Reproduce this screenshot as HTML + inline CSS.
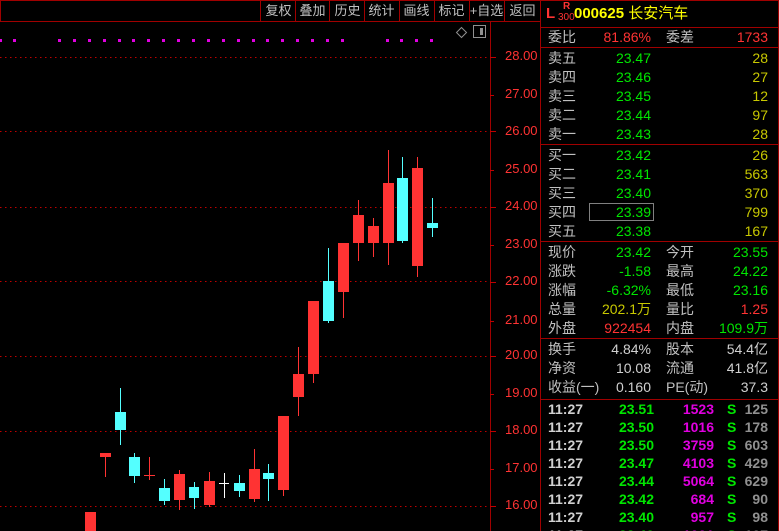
<!DOCTYPE html>
<html><head><meta charset="utf-8"><style>
*{margin:0;padding:0;box-sizing:border-box}
html,body{width:779px;height:531px;overflow:hidden}
body{background:#000;position:relative;font-family:"Liberation Sans","Noto Sans CJK SC",sans-serif;font-size:14px;color:#c0c0c0}
.a{position:absolute;white-space:nowrap;line-height:18px}
.r{text-align:right}
.g{color:#00e600}.rd{color:#ff3333}.y{color:#c8c800}.m{color:#e000e0}.w{color:#d0d0d0}
.btn{position:absolute;top:2px;font-size:13px;color:#c0c0c0;width:35px;text-align:center;line-height:18px}
</style></head><body>
<svg width="779" height="531" style="position:absolute;left:0;top:0">
<rect x="0.5" y="0.5" width="540" height="21" fill="none" stroke="#a00000"/>
<g stroke="#a00000"><line x1="260.5" y1="0" x2="260.5" y2="21"/><line x1="295.5" y1="0" x2="295.5" y2="21"/><line x1="329.5" y1="0" x2="329.5" y2="21"/><line x1="364.5" y1="0" x2="364.5" y2="21"/><line x1="399.5" y1="0" x2="399.5" y2="21"/><line x1="434.5" y1="0" x2="434.5" y2="21"/><line x1="469.5" y1="0" x2="469.5" y2="21"/><line x1="504.5" y1="0" x2="504.5" y2="21"/>
<line x1="490.5" y1="22" x2="490.5" y2="531"/><line x1="540.5" y1="0" x2="540.5" y2="531"/><line x1="778.5" y1="0" x2="778.5" y2="531"/></g>
<g stroke="#c00000" stroke-dasharray="1.5 3.5"><line x1="0" y1="57.5" x2="490" y2="57.5"/><line x1="0" y1="131.5" x2="490" y2="131.5"/><line x1="0" y1="207.5" x2="490" y2="207.5"/><line x1="0" y1="281.5" x2="490" y2="281.5"/><line x1="0" y1="356.5" x2="490" y2="356.5"/><line x1="0" y1="431.5" x2="490" y2="431.5"/><line x1="0" y1="506.5" x2="490" y2="506.5"/></g>
<g stroke="#c00000"><line x1="490" y1="57.5" x2="496" y2="57.5"/><line x1="490" y1="95.5" x2="494" y2="95.5"/><line x1="490" y1="131.5" x2="496" y2="131.5"/><line x1="490" y1="170.5" x2="494" y2="170.5"/><line x1="490" y1="207.5" x2="496" y2="207.5"/><line x1="490" y1="245.5" x2="494" y2="245.5"/><line x1="490" y1="282.5" x2="496" y2="282.5"/><line x1="490" y1="321.5" x2="494" y2="321.5"/><line x1="490" y1="356.5" x2="496" y2="356.5"/><line x1="490" y1="394.5" x2="494" y2="394.5"/><line x1="490" y1="431.5" x2="496" y2="431.5"/><line x1="490" y1="469.5" x2="494" y2="469.5"/><line x1="490" y1="506.5" x2="496" y2="506.5"/></g>
<g fill="#e000e0"><rect x="0" y="39" width="2" height="3"/><rect x="13" y="39" width="3" height="3"/><rect x="58" y="39" width="3" height="3"/><rect x="73" y="39" width="3" height="3"/><rect x="88" y="39" width="3" height="3"/><rect x="103" y="39" width="3" height="3"/><rect x="118" y="39" width="3" height="3"/><rect x="132" y="39" width="3" height="3"/><rect x="147" y="39" width="3" height="3"/><rect x="162" y="39" width="3" height="3"/><rect x="177" y="39" width="3" height="3"/><rect x="192" y="39" width="3" height="3"/><rect x="207" y="39" width="3" height="3"/><rect x="222" y="39" width="3" height="3"/><rect x="237" y="39" width="3" height="3"/><rect x="252" y="39" width="3" height="3"/><rect x="266" y="39" width="3" height="3"/><rect x="281" y="39" width="3" height="3"/><rect x="296" y="39" width="3" height="3"/><rect x="311" y="39" width="3" height="3"/><rect x="326" y="39" width="3" height="3"/><rect x="341" y="39" width="3" height="3"/><rect x="386" y="39" width="3" height="3"/><rect x="400" y="39" width="3" height="3"/><rect x="415" y="39" width="3" height="3"/><rect x="430" y="39" width="3" height="3"/></g>
<path d="M461.5 27.5 L466.5 32.5 L461.5 37.5 L456.5 32.5 Z" fill="none" stroke="#909090"/>
<rect x="473.5" y="25.5" width="12" height="12" fill="none" stroke="#909090"/><rect x="480" y="28" width="3" height="7" fill="#909090"/>
<g fill="#ff3333" stroke="#ff3333">
<rect x="85" y="512" width="11" height="20" stroke="none"/>
<line x1="105.5" y1="453" x2="105.5" y2="477"/><rect x="100" y="453" width="11" height="4" stroke="none"/>
<line x1="149.5" y1="457" x2="149.5" y2="480"/><line x1="144" y1="475.5" x2="155" y2="475.5"/>
<line x1="179.5" y1="470" x2="179.5" y2="510"/><rect x="174" y="474" width="11" height="26" stroke="none"/>
<line x1="209.5" y1="472" x2="209.5" y2="507"/><rect x="204" y="481" width="11" height="24" stroke="none"/>
<line x1="254.5" y1="449" x2="254.5" y2="502"/><rect x="249" y="469" width="11" height="30" stroke="none"/>
<line x1="283.5" y1="416" x2="283.5" y2="496"/><rect x="278" y="416" width="11" height="74" stroke="none"/>
<line x1="298.5" y1="347" x2="298.5" y2="416"/><rect x="293" y="374" width="11" height="23" stroke="none"/>
<line x1="313.5" y1="301" x2="313.5" y2="383"/><rect x="308" y="301" width="11" height="73" stroke="none"/>
<line x1="343.5" y1="243" x2="343.5" y2="318"/><rect x="338" y="243" width="11" height="49" stroke="none"/>
<line x1="358.5" y1="200" x2="358.5" y2="261"/><rect x="353" y="215" width="11" height="28" stroke="none"/>
<line x1="373.5" y1="218" x2="373.5" y2="257"/><rect x="368" y="226" width="11" height="17" stroke="none"/>
<line x1="388.5" y1="150" x2="388.5" y2="265"/><rect x="383" y="183" width="11" height="60" stroke="none"/>
<line x1="417.5" y1="157" x2="417.5" y2="277"/><rect x="412" y="168" width="11" height="98" stroke="none"/>
</g>
<g fill="#54ffff" stroke="#54ffff">
<line x1="120.5" y1="388" x2="120.5" y2="445"/><rect x="115" y="412" width="11" height="18" stroke="none"/>
<line x1="134.5" y1="453" x2="134.5" y2="483"/><rect x="129" y="457" width="11" height="19" stroke="none"/>
<line x1="164.5" y1="479" x2="164.5" y2="505"/><rect x="159" y="488" width="11" height="13" stroke="none"/>
<line x1="194.5" y1="482" x2="194.5" y2="509"/><rect x="189" y="487" width="10" height="11" stroke="none"/>
<line x1="239.5" y1="475" x2="239.5" y2="497"/><rect x="234" y="483" width="11" height="8" stroke="none"/>
<line x1="268.5" y1="464" x2="268.5" y2="501"/><rect x="263" y="473" width="11" height="6" stroke="none"/>
<line x1="328.5" y1="248" x2="328.5" y2="323"/><rect x="323" y="281" width="11" height="40" stroke="none"/>
<line x1="402.5" y1="157" x2="402.5" y2="243"/><rect x="397" y="178" width="11" height="63" stroke="none"/>
<line x1="432.5" y1="198" x2="432.5" y2="237"/><rect x="427" y="223" width="11" height="5" stroke="none"/>
</g>
<g stroke="#fff"><line x1="224.5" y1="473" x2="224.5" y2="498"/><line x1="219" y1="483.5" x2="229" y2="483.5"/></g>
<g stroke="#a00000"><line x1="541" y1="27.5" x2="779" y2="27.5"/><line x1="541" y1="47.5" x2="779" y2="47.5"/><line x1="541" y1="144.5" x2="779" y2="144.5"/><line x1="541" y1="241.5" x2="779" y2="241.5"/><line x1="541" y1="338.5" x2="779" y2="338.5"/><line x1="541" y1="399.5" x2="779" y2="399.5"/><line x1="541" y1="0.5" x2="779" y2="0.5"/></g>
<rect x="589.5" y="203.5" width="64" height="17" fill="none" stroke="#808080"/>
</svg>
<div class="btn" style="left:261px">复权</div><div class="btn" style="left:295px">叠加</div><div class="btn" style="left:330px">历史</div><div class="btn" style="left:364px">统计</div><div class="btn" style="left:399px">画线</div><div class="btn" style="left:434px">标记</div><div class="btn" style="left:469px">+自选</div><div class="btn" style="left:505px">返回</div>
<div style="position:absolute;left:505px;top:47px;font-size:13px;color:#ff3333;line-height:20px">
<div class="a" style="top:0">28.00</div><div class="a" style="top:38px">27.00</div><div class="a" style="top:75px">26.00</div><div class="a" style="top:113px">25.00</div><div class="a" style="top:150px">24.00</div><div class="a" style="top:188px">23.00</div><div class="a" style="top:225px">22.00</div><div class="a" style="top:264px">21.00</div><div class="a" style="top:299px">20.00</div><div class="a" style="top:337px">19.00</div><div class="a" style="top:374px">18.00</div><div class="a" style="top:412px">17.00</div><div class="a" style="top:449px">16.00</div></div>
<div class="a rd" style="left:546px;top:5px;font-size:15px;font-weight:bold">L</div>
<div class="a rd" style="left:563px;top:2px;font-size:10px;line-height:10px;font-weight:bold">R</div>
<div class="a rd" style="left:558px;top:13px;font-size:10px;line-height:10px">300</div>
<div class="a" style="left:574px;top:5px;color:#ffff00;font-size:15px"><b>000625</b> 长安汽车</div>
<div class="a" style="left:548px;top:28px">委比</div><div class="a rd r" style="left:590px;width:61px;top:28px">81.86%</div><div class="a" style="left:666px;top:28px">委差</div><div class="a rd r" style="left:700px;width:68px;top:28px">1733</div>
<div style="position:absolute;left:0;top:49px">
<div class="a" style="left:548px;top:0">卖五</div><div class="a g r" style="left:590px;width:61px;top:0">23.47</div><div class="a y r" style="left:700px;width:68px;top:0">28</div>
<div class="a" style="left:548px;top:19px">卖四</div><div class="a g r" style="left:590px;width:61px;top:19px">23.46</div><div class="a y r" style="left:700px;width:68px;top:19px">27</div>
<div class="a" style="left:548px;top:38px">卖三</div><div class="a g r" style="left:590px;width:61px;top:38px">23.45</div><div class="a y r" style="left:700px;width:68px;top:38px">12</div>
<div class="a" style="left:548px;top:57px">卖二</div><div class="a g r" style="left:590px;width:61px;top:57px">23.44</div><div class="a y r" style="left:700px;width:68px;top:57px">97</div>
<div class="a" style="left:548px;top:76px">卖一</div><div class="a g r" style="left:590px;width:61px;top:76px">23.43</div><div class="a y r" style="left:700px;width:68px;top:76px">28</div>
<div class="a" style="left:548px;top:97px">买一</div><div class="a g r" style="left:590px;width:61px;top:97px">23.42</div><div class="a y r" style="left:700px;width:68px;top:97px">26</div>
<div class="a" style="left:548px;top:116px">买二</div><div class="a g r" style="left:590px;width:61px;top:116px">23.41</div><div class="a y r" style="left:700px;width:68px;top:116px">563</div>
<div class="a" style="left:548px;top:135px">买三</div><div class="a g r" style="left:590px;width:61px;top:135px">23.40</div><div class="a y r" style="left:700px;width:68px;top:135px">370</div>
<div class="a" style="left:548px;top:154px">买四</div><div class="a g r" style="left:590px;width:61px;top:154px">23.39</div><div class="a y r" style="left:700px;width:68px;top:154px">799</div>
<div class="a" style="left:548px;top:173px">买五</div><div class="a g r" style="left:590px;width:61px;top:173px">23.38</div><div class="a y r" style="left:700px;width:68px;top:173px">167</div>
<div class="a" style="left:548px;top:194px">现价</div><div class="a g r" style="left:590px;width:61px;top:194px">23.42</div><div class="a" style="left:666px;top:194px">今开</div><div class="a g r" style="left:700px;width:68px;top:194px">23.55</div>
<div class="a" style="left:548px;top:213px">涨跌</div><div class="a g r" style="left:590px;width:61px;top:213px">-1.58</div><div class="a" style="left:666px;top:213px">最高</div><div class="a g r" style="left:700px;width:68px;top:213px">24.22</div>
<div class="a" style="left:548px;top:232px">涨幅</div><div class="a g r" style="left:590px;width:61px;top:232px">-6.32%</div><div class="a" style="left:666px;top:232px">最低</div><div class="a g r" style="left:700px;width:68px;top:232px">23.16</div>
<div class="a" style="left:548px;top:251px">总量</div><div class="a y r" style="left:590px;width:61px;top:251px">202.1万</div><div class="a" style="left:666px;top:251px">量比</div><div class="a rd r" style="left:700px;width:68px;top:251px">1.25</div>
<div class="a" style="left:548px;top:270px">外盘</div><div class="a rd r" style="left:590px;width:61px;top:270px">922454</div><div class="a" style="left:666px;top:270px">内盘</div><div class="a g r" style="left:700px;width:68px;top:270px">109.9万</div>
<div class="a" style="left:548px;top:291px">换手</div><div class="a w r" style="left:590px;width:61px;top:291px">4.84%</div><div class="a" style="left:666px;top:291px">股本</div><div class="a w r" style="left:700px;width:68px;top:291px">54.4亿</div>
<div class="a" style="left:548px;top:310px">净资</div><div class="a w r" style="left:590px;width:61px;top:310px">10.08</div><div class="a" style="left:666px;top:310px">流通</div><div class="a w r" style="left:700px;width:68px;top:310px">41.8亿</div>
<div class="a" style="left:548px;top:329px">收益(一)</div><div class="a w r" style="left:590px;width:61px;top:329px">0.160</div><div class="a" style="left:666px;top:329px">PE(动)</div><div class="a w r" style="left:700px;width:68px;top:329px">37.3</div>
</div>
<div style="position:absolute;left:0;top:400px;font-weight:bold">
<div class="a w" style="left:548px;top:0">11:27</div><div class="a g r" style="left:590px;width:64px;top:0">23.51</div><div class="a m r" style="left:650px;width:64px;top:0">1523</div><div class="a g" style="left:727px;top:0">S</div><div class="a r" style="left:740px;width:28px;top:0;color:#909090">125</div>
<div class="a w" style="left:548px;top:18px">11:27</div><div class="a g r" style="left:590px;width:64px;top:18px">23.50</div><div class="a m r" style="left:650px;width:64px;top:18px">1016</div><div class="a g" style="left:727px;top:18px">S</div><div class="a r" style="left:740px;width:28px;top:18px;color:#909090">178</div>
<div class="a w" style="left:548px;top:36px">11:27</div><div class="a g r" style="left:590px;width:64px;top:36px">23.50</div><div class="a m r" style="left:650px;width:64px;top:36px">3759</div><div class="a g" style="left:727px;top:36px">S</div><div class="a r" style="left:740px;width:28px;top:36px;color:#909090">603</div>
<div class="a w" style="left:548px;top:54px">11:27</div><div class="a g r" style="left:590px;width:64px;top:54px">23.47</div><div class="a m r" style="left:650px;width:64px;top:54px">4103</div><div class="a g" style="left:727px;top:54px">S</div><div class="a r" style="left:740px;width:28px;top:54px;color:#909090">429</div>
<div class="a w" style="left:548px;top:72px">11:27</div><div class="a g r" style="left:590px;width:64px;top:72px">23.44</div><div class="a m r" style="left:650px;width:64px;top:72px">5064</div><div class="a g" style="left:727px;top:72px">S</div><div class="a r" style="left:740px;width:28px;top:72px;color:#909090">629</div>
<div class="a w" style="left:548px;top:90px">11:27</div><div class="a g r" style="left:590px;width:64px;top:90px">23.42</div><div class="a m r" style="left:650px;width:64px;top:90px">684</div><div class="a g" style="left:727px;top:90px">S</div><div class="a r" style="left:740px;width:28px;top:90px;color:#909090">90</div>
<div class="a w" style="left:548px;top:108px">11:27</div><div class="a g r" style="left:590px;width:64px;top:108px">23.40</div><div class="a m r" style="left:650px;width:64px;top:108px">957</div><div class="a g" style="left:727px;top:108px">S</div><div class="a r" style="left:740px;width:28px;top:108px;color:#909090">98</div>
<div class="a w" style="left:548px;top:126px">11:27</div><div class="a g r" style="left:590px;width:64px;top:126px">23.40</div><div class="a m r" style="left:650px;width:64px;top:126px">1001</div><div class="a g" style="left:727px;top:126px">S</div><div class="a r" style="left:740px;width:28px;top:126px;color:#909090">107</div>
</div>
</body></html>
